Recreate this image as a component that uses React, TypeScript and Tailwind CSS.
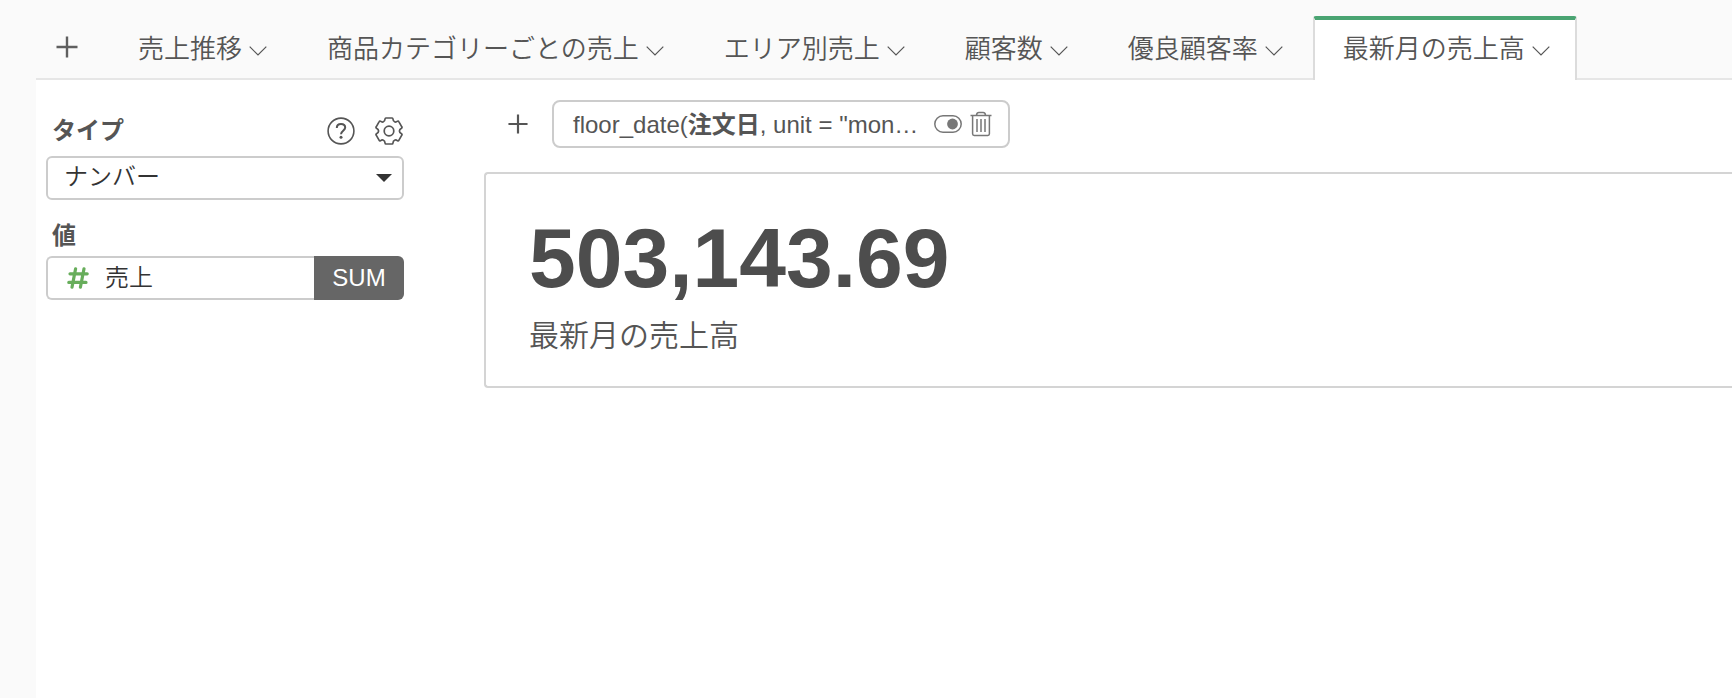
import type { ReactNode } from 'react'

const TABS = [
  '売上推移',
  '商品カテゴリーごとの売上',
  'エリア別売上',
  '顧客数',
  '優良顧客率',
  '最新月の売上高',
]

function PlusIcon({ className }: { className?: string }) {
  return (
    <svg viewBox="0 0 22 22" className={className} fill="none" stroke="currentColor" strokeWidth="2.4" aria-hidden="true">
      <path d="M11 0.5v21M0.5 11h21" />
    </svg>
  )
}

function ChevronIcon() {
  return (
    <svg viewBox="0 0 18 10" className="mt-1 h-[10px] w-[18px]" fill="none" stroke="currentColor" strokeWidth="1.2" aria-hidden="true">
      <path d="M0.7 0.7 9 9 17.3 0.7" />
    </svg>
  )
}

function HelpIcon() {
  return (
    <svg viewBox="0 0 28 28" className="size-7" fill="none" stroke="currentColor" aria-hidden="true">
      <circle cx="14" cy="14" r="12.9" strokeWidth="1.6" />
      <path d="M9.8 11c0-2.5 1.8-4 4.2-4s4.2 1.4 4.2 3.6c0 3-4.2 3.3-4.2 6.6" strokeWidth="2" />
      <circle cx="14" cy="20.2" r="1.5" fill="currentColor" stroke="none" />
    </svg>
  )
}

function GearIcon() {
  return (
    <svg viewBox="-14 -14 28 28" className="size-7" fill="none" stroke="currentColor" strokeWidth="1.7" strokeLinejoin="round" aria-hidden="true">
      <circle r="4.8" />
      <path d="M-3.2-13H3.2Q3.8-13 3.9-12.2Q4.1-9.8 5.6-9.2Q6.8-8.4 8.6-9.8Q9.4-10.2 9.8-9.4L12.8-4.2Q13.3-3.4 12.5-2.8Q10.4-1.6 10.4 0Q10.4 1.6 12.5 2.8Q13.3 3.4 12.8 4.2L9.8 9.4Q9.4 10.2 8.6 9.8Q6.8 8.4 5.6 9.2Q4.1 9.8 3.9 12.2Q3.8 13 3.2 13H-3.2Q-3.8 13-3.9 12.2Q-4.1 9.8-5.6 9.2Q-6.8 8.4-8.6 9.8Q-9.4 10.2-9.8 9.4L-12.8 4.2Q-13.3 3.4-12.5 2.8Q-10.4 1.6-10.4 0Q-10.4-1.6-12.5-2.8Q-13.3-3.4-12.8-4.2L-9.8-9.4Q-9.4-10.2-8.6-9.8Q-6.8-8.4-5.6-9.2Q-4.1-9.8-3.9-12.2Q-3.8-13-3.2-13Z" />
    </svg>
  )
}

function HashIcon() {
  return (
    <svg viewBox="0 0 22 22" className="size-[22px] text-[#67ad5b]" fill="none" stroke="currentColor" strokeWidth="3.2" strokeLinecap="round" aria-hidden="true">
      <path d="M8.6 1.8 5 20.2M17 1.8 13.4 20.2M3 6.8h17.2M1.8 15.4H19" />
    </svg>
  )
}

function ToggleIcon() {
  return (
    <svg viewBox="0 0 28 18" className="h-[18px] w-7" aria-hidden="true">
      <rect x="0.8" y="0.8" width="26.4" height="16.4" rx="8.2" fill="none" stroke="currentColor" strokeWidth="1.5" />
      <circle cx="18.5" cy="9" r="5.4" fill="currentColor" />
    </svg>
  )
}

function TrashIcon() {
  return (
    <svg viewBox="0 0 22 26" className="h-[26px] w-[22px]" fill="none" stroke="currentColor" strokeWidth="1.5" aria-hidden="true">
      <path d="M0.5 4.5h21M2.6 4.5v18.3c0 1 .6 1.7 1.6 1.7h13.6c1 0 1.6-.7 1.6-1.7V4.5M6.4 4.3c.4-2 1.2-2.7 2.4-2.7h4.4c1.2 0 2 .7 2.4 2.7M7 8v13M11 8v13M15 8v13" />
    </svg>
  )
}

function IconButton({ label, children }: { label: string; children: ReactNode }) {
  return (
    <button type="button" aria-label={label} className="flex items-center justify-center">
      {children}
    </button>
  )
}

function TabBar({ active }: { active: string }) {
  return (
    <header className="flex h-20 items-end border-b-2 border-[#e6e6e6] bg-[#fafafa]">
      <div className="flex h-[62px] w-[72px] items-center pl-5 text-[#5f5f5f]">
        <IconButton label="追加">
          <PlusIcon className="size-[22px]" />
        </IconButton>
      </div>
      <div role="tablist" className="-mb-[2px] flex gap-[3px]">
        {TABS.map((tab) => (
          <button
            key={tab}
            type="button"
            role="tab"
            aria-selected={tab === active}
            className={`flex h-16 items-center gap-[7px] whitespace-nowrap border-x-2 border-t-4 pr-[25px] pb-[2px] pl-7 text-[26px] leading-[52px] font-[350] ${
              tab === active
                ? 'rounded-t-[3px] border-x-[#dcdcdc] border-t-[#4aa472] bg-white'
                : 'border-transparent'
            }`}
          >
            {tab}
            <ChevronIcon />
          </button>
        ))}
      </div>
    </header>
  )
}

function Sidebar() {
  return (
    <aside className="w-[368px] shrink-0 pt-8 pl-[10px]">
      <div className="flex h-11 items-center justify-between pr-px pb-[6px] pl-[6px]">
        <label htmlFor="chart-type" className="font-bold">
          タイプ
        </label>
        <div className="flex gap-5">
          <IconButton label="ヘルプ">
            <HelpIcon />
          </IconButton>
          <IconButton label="設定">
            <GearIcon />
          </IconButton>
        </div>
      </div>
      <div className="relative">
        <select
          id="chart-type"
          className="h-11 w-full appearance-none rounded-md border-2 border-[#ccc] bg-white pb-[2px] pl-4 font-[350] text-[#333]"
        >
          <option>ナンバー</option>
        </select>
        <svg viewBox="0 0 16 8" className="pointer-events-none absolute top-[18px] right-3 h-2 w-4 fill-[#333]" aria-hidden="true">
          <path d="M0 0h16L8 8z" />
        </svg>
      </div>
      <div className="mt-4 flex h-10 items-center pl-[6px] font-bold">値</div>
      <div className="flex h-11">
        <button
          type="button"
          className="flex flex-1 items-center gap-4 rounded-l-md border-2 border-r-0 border-[#ccc] pl-[19px] font-[350] text-[#333]"
        >
          <HashIcon />
          売上
        </button>
        <button type="button" className="w-[90px] rounded-r-md bg-[#666] text-white">
          SUM
        </button>
      </div>
    </aside>
  )
}

function FilterBar() {
  return (
    <div className="flex items-center pl-6">
      <IconButton label="フィルタを追加">
        <PlusIcon className="size-5" />
      </IconButton>
      <div className="ml-6 flex h-12 w-[458px] items-center justify-between rounded-lg border-2 border-[#ccc] pr-4 pl-[19px]">
        <button type="button" className="pt-[2px] whitespace-nowrap">
          floor_date(<b>注文日</b>, unit = "mon…
        </button>
        <div className="flex items-center gap-2 text-[#777]">
          <IconButton label="有効">
            <ToggleIcon />
          </IconButton>
          <IconButton label="削除">
            <TrashIcon />
          </IconButton>
        </div>
      </div>
    </div>
  )
}

export default function App() {
  return (
    <div className="min-h-screen overflow-hidden bg-[#fafafa] pl-9 font-['Liberation_Sans','Noto_Sans_CJK_JP',sans-serif] text-2xl text-[#555]">
      <div className="flex min-h-screen flex-col bg-white">
        <TabBar active="最新月の売上高" />
        <div className="flex flex-1">
          <Sidebar />
          <main className="min-w-0 flex-1 pt-5 pl-20">
            <FilterBar />
            <section className="mt-6 rounded-l-[4px] border-2 border-r-0 border-[#d4d4d4] px-[43px] pt-[38px] pb-[30px]">
              <p className="text-[84px] leading-[92px] font-bold text-[#4d4d4d]">503,143.69</p>
              <h2 className="mt-3 text-[30px] leading-10 font-[350]">最新月の売上高</h2>
            </section>
          </main>
        </div>
      </div>
    </div>
  )
}
